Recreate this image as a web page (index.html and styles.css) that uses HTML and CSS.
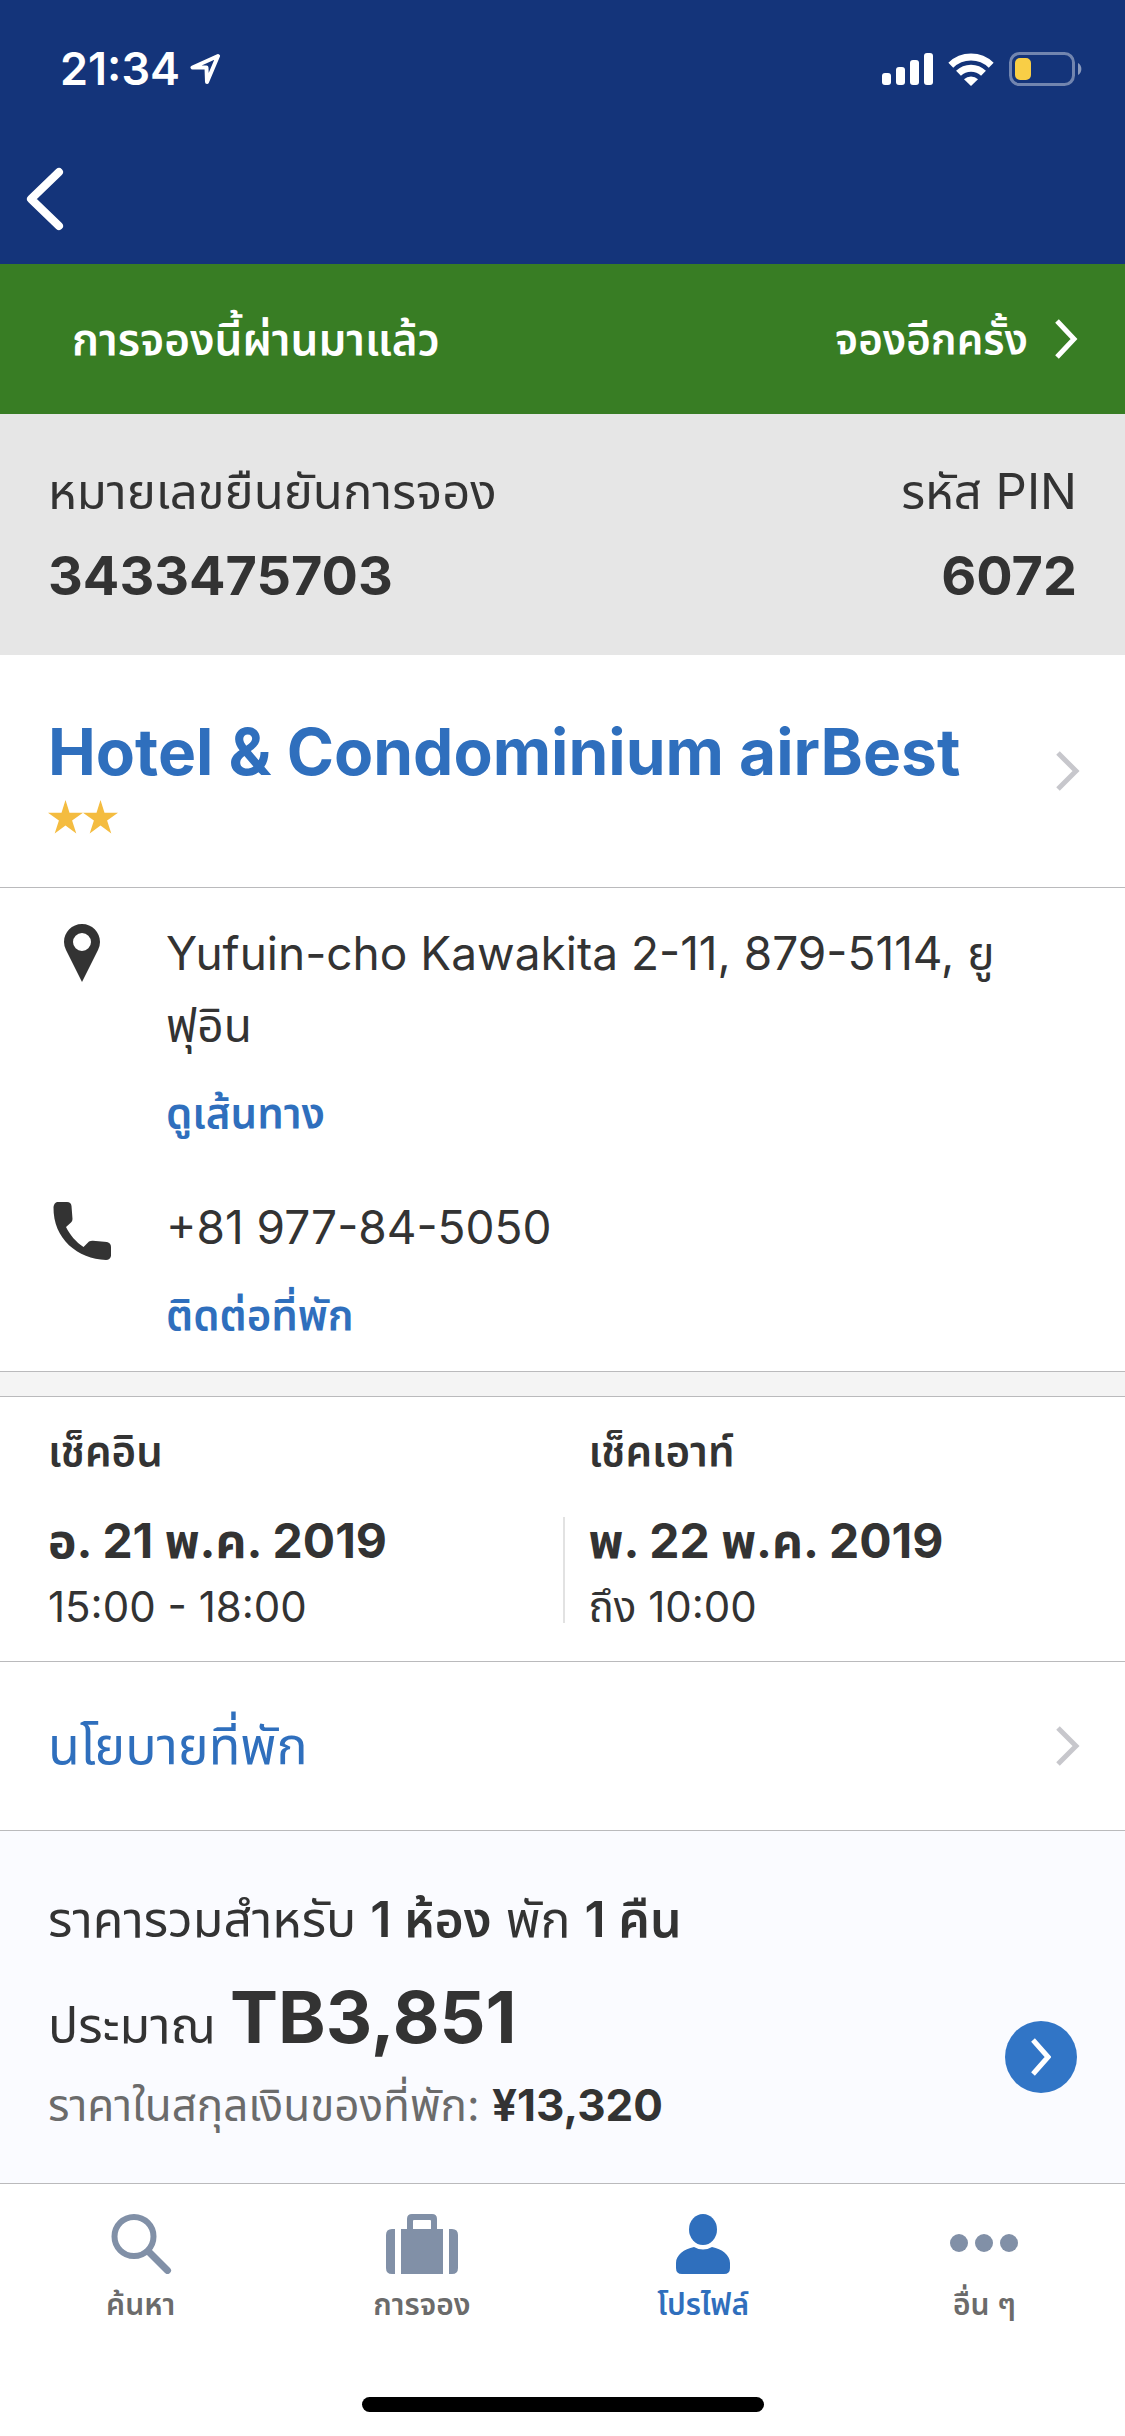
FILE: index.html
```
<!DOCTYPE html>
<html lang="th">
<head>
<meta charset="utf-8">
<title>การจอง</title>
<meta name="viewport" content="width=device-width, initial-scale=1">
<link rel="stylesheet" href="styles.css">
</head>
<body>
<div class="app">
  <header class="header">
    <div class="status">
      <span class="clock">21:34</span>
      <svg class="locate" width="32" height="32" viewBox="0 0 32 32" aria-hidden="true"><path d="M28 3L2.500 14.500H16.500L17 29Z" fill="none" stroke="#fff" stroke-width="4" stroke-linejoin="round"/></svg>
      <span class="status-icons">
        <svg width="51" height="33" viewBox="0 0 51 33" aria-hidden="true"><g fill="#fff"><rect y="20" width="9" height="12" rx="3"/><rect x="14" y="14" width="9" height="18" rx="3"/><rect x="28" y="7" width="9" height="25" rx="3"/><rect x="42" width="9" height="32" rx="3"/></g></svg>
        <svg width="46" height="33" viewBox="0 0 46 33" aria-hidden="true"><g fill="none" stroke="#fff" stroke-width="7"><path d="M2.800 12.200A29 29 0 0 1 43.200 12.200"/><path d="M10.500 20.200A18 18 0 0 1 35.500 20.200"/></g><path d="M16 26.300A10 10 0 0 1 30 26.300L23 33Z" fill="#fff"/></svg>
        <svg width="73" height="34" viewBox="0 0 73 34" aria-hidden="true"><rect x="1.500" y="1.500" width="63" height="31" rx="9" fill="none" stroke="#fff" stroke-opacity=".4" stroke-width="3"/><rect x="6" y="6" width="16" height="22" rx="5" fill="#f8ce46"/><path d="M69 11A7 7 0 0 1 69 23Z" fill="#fff" fill-opacity=".5"/></svg>
      </span>
    </div>
    <button class="back" type="button" aria-label="ย้อนกลับ"><svg width="38" height="64" viewBox="0 0 38 64" aria-hidden="true"><path d="M33 5L5 32L33 59" fill="none" stroke="#fff" stroke-width="8" stroke-linecap="round" stroke-linejoin="round"/></svg></button>
  </header>

  <main>
    <section class="banner">
      <span class="banner-title">การจองนี้ผ่านมาแล้ว</span>
      <a class="again" href="#">จองอีกครั้ง <svg width="26" height="40" viewBox="0 0 26 40" aria-hidden="true"><path d="M4 2L21 20L4 38" fill="none" stroke="#fff" stroke-width="5"/></svg></a>
    </section>

    <dl class="codes">
      <div><dt>หมายเลขยืนยันการจอง</dt><dd>3433475703</dd></div>
      <div class="right"><dt>รหัส PIN</dt><dd>6072</dd></div>
    </dl>

    <a class="hotel" href="#">
      <span>
        <strong class="hotel-name">Hotel &amp; Condominium airBest</strong>
        <svg class="stars" width="70" height="34" viewBox="0 0 70 34" role="img" aria-label="2"><g fill="#f4bc40"><path id="s" d="M17.500 0L21.500 12.700H35L24.100 20.500L28.300 33.500L17.500 25.500L6.700 33.500L10.900 20.500L0 12.700H13.500Z"/><use href="#s" x="35"/></g></svg>
      </span>
      <svg class="chevron" width="26" height="40" viewBox="0 0 26 40" aria-hidden="true"><path d="M3 2L21 20L3 38"/></svg>
    </a>

    <section class="contact">
      <div class="contact-row">
        <svg width="70" height="64" viewBox="0 0 70 64" aria-hidden="true"><path fill-rule="evenodd" d="M34 1C24 1 16 9 16 19Q16 23 18 27L34 59L50 27Q52 23 52 19C52 9 44 1 34 1ZM34 10A9 9 0 1 1 34 28A9 9 0 1 1 34 10Z" fill="#333"/></svg>
        <div>
          <p>Yufuin-cho Kawakita 2-11, 879-5114, ยู<br>ฟุอิน</p>
          <a href="#">ดูเส้นทาง</a>
        </div>
      </div>
      <div class="contact-row">
        <svg width="70" height="64" viewBox="0 0 70 64" aria-hidden="true"><path d="M9 5H19Q23 5 23.500 9L24.500 22Q24.500 24 23 25.500L18 30C22 38 28 45 35.500 50L41 44.500Q43 43.500 45 43.700L59 45Q63 46 63 50V59Q62 63 58 63C30 62 5 42 5.500 10Q6 6 9 5Z" fill="#333"/></svg>
        <div>
          <p>+81 977-84-5050</p>
          <a href="#">ติดต่อที่พัก</a>
        </div>
      </div>
    </section>

    <div class="gap"></div>

    <section class="dates">
      <h2>เช็คอิน</h2>
      <h2>เช็คเอาท์</h2>
      <div class="date"><strong>อ. 21 พ.ค. 2019</strong><span>15:00 - 18:00</span></div>
      <div class="date"><strong>พ. 22 พ.ค. 2019</strong><span>ถึง 10:00</span></div>
    </section>

    <a class="policy" href="#">
      <span>นโยบายที่พัก</span>
      <svg class="chevron" width="26" height="40" viewBox="0 0 26 40" aria-hidden="true"><path d="M3 2L21 20L3 38"/></svg>
    </a>

    <section class="price">
      <div>
        <p class="summary">ราคารวมสำหรับ <b>1 ห้อง</b> พัก <b>1 คืน</b></p>
        <p class="total">ประมาณ <strong>TB3,851</strong></p>
        <p class="local">ราคาในสกุลเงินของที่พัก: <b>¥13,320</b></p>
      </div>
      <button class="more" type="button" aria-label="รายละเอียดราคา"><svg width="20" height="38" viewBox="0 0 20 38" aria-hidden="true"><path d="M2 2L17 19L2 36" fill="none" stroke="#fff" stroke-width="5"/></svg></button>
    </section>
  </main>

  <nav class="tabs">
    <a href="#"><svg width="62" height="60" viewBox="0 0 62 60" aria-hidden="true"><circle cx="24" cy="22.500" r="19.500" fill="none" stroke="#8190a7" stroke-width="6"/><path d="M39 38L57.500 56.500" stroke="#8190a7" stroke-width="7" stroke-linecap="round"/></svg><span>ค้นหา</span></a>
    <a href="#"><svg width="72" height="60" viewBox="0 0 72 60" aria-hidden="true"><path fill-rule="evenodd" d="M9 15H6Q0 15 0 21V54Q0 60 6 60H9ZM63 15H66Q72 15 72 21V54Q72 60 66 60H63ZM15 15H21V5Q21 0 26 0H46Q51 0 51 5V15H57V60H15ZM27 15H45V7Q45 6 44 6H28Q27 6 27 7Z" fill="#8190a7"/></svg><span>การจอง</span></a>
    <a class="active" href="#" aria-current="page"><svg width="54" height="60" viewBox="0 0 54 60" aria-hidden="true"><ellipse cx="27" cy="15.500" rx="14" ry="15.500" fill="#2f6fbd"/><path d="M18 33Q27 38 36 33C46 35 54 41 54 49V54Q54 60 48 60H6Q0 60 0 54V49C0 41 8 35 18 33Z" fill="#2f6fbd"/></svg><span>โปรไฟล์</span></a>
    <a href="#"><svg width="68" height="60" viewBox="0 0 68 60" aria-hidden="true"><g fill="#8190a7"><circle cx="9" cy="29" r="9"/><circle cx="34" cy="29" r="9"/><circle cx="59" cy="29" r="9"/></g></svg><span>อื่น ๆ</span></a>
  </nav>
  <div class="home-bar"></div>
</div>
</body>
</html>
```
FILE: styles.css
```
* { box-sizing: border-box; }
body, p, h2, dl, dd { margin: 0; }
body {
  background: #fff;
  color: #333;
  font-family: Inter, "Noto Sans Thai", "Noto Sans Thai Looped", "Noto Sans", sans-serif;
  font-size: 48px;
  line-height: 72px;
}
a { color: #2f6fbd; text-decoration: none; }
button { border: 0; padding: 0; background: none; cursor: pointer; }
svg { display: block; flex: none; }
b, strong { font-weight: 700; }

.app { display: flex; flex-direction: column; min-height: 100vh; }

.header { min-height: 264px; background: #14347a; }
.status { display: flex; align-items: center; padding: 36px 43px 0 60px; }
.clock { color: #fff; font-size: 45px; font-weight: 600; line-height: 66px; }
.locate { margin-left: 10px; }
.status-icons { display: flex; align-items: center; gap: 15px; margin-left: auto; }
.back { display: block; margin: 65px 0 0 26px; }

.banner {
  display: flex;
  justify-content: space-between;
  align-items: center;
  min-height: 150px;
  padding: 0 46px 0 72px;
  background: #387d24;
  color: #fff;
  font-weight: 600;
}
.banner-title { font-size: 44px; }
.again { display: flex; align-items: center; gap: 25px; color: #fff; font-size: 42px; }

.codes {
  display: flex;
  justify-content: space-between;
  padding: 42px 48px 31px;
  background: #e6e6e6;
}
.codes dt { font-size: 49px; }
.codes dd { font-size: 54px; font-weight: 700; line-height: 96px; }
.right { text-align: right; }

.hotel, .policy {
  display: flex;
  justify-content: space-between;
  align-items: center;
  padding: 0 44px 0 48px;
  border-bottom: 1px solid #bababc;
}
.hotel { min-height: 233px; }
.hotel-name { display: block; font-size: 64px; line-height: 94px; }
.stars { margin: 1px 0 4px; }
.chevron { fill: none; stroke: #c7c7cc; stroke-width: 5; }

.contact {
  display: flex;
  flex-direction: column;
  gap: 26px;
  padding: 29px 90px 4px 48px;
  border-bottom: 1px solid #bababc;
  font-size: 46px;
}
.contact-row { display: flex; gap: 48px; }
.contact-row svg { margin-top: 6px; }
.contact a { display: block; font-size: 42px; font-weight: 600; line-height: 104px; }

.gap { height: 25px; background: #f4f4f4; border-bottom: 1px solid #bababc; }

.dates {
  display: grid;
  grid-template-columns: 1fr 1fr;
  row-gap: 30px;
  padding: 18px 0 38px;
  border-bottom: 1px solid #bababc;
}
.dates h2 { padding-left: 48px; font-size: 42px; font-weight: 600; }
.dates h2 + h2 { padding-left: 26px; }
.date { padding-left: 48px; }
.date + .date { padding-left: 24px; border-left: 2px solid #e2e2e2; }
.date strong { display: block; line-height: 48px; }
.date span { display: block; margin-top: 26px; font-size: 42px; line-height: 32px; }

.policy { min-height: 169px; font-size: 52px; }

.price {
  display: flex;
  justify-content: space-between;
  align-items: flex-end;
  padding: 52px 48px;
  background: #fafbff;
  border-bottom: 1px solid #bababc;
  font-size: 50px;
}
.summary b { font-weight: 600; }
.total { margin-top: 16px; line-height: 108px; }
.total strong { font-size: 72px; line-height: 72px; }
.local { color: #6b6b6b; font-size: 44px; line-height: 52px; }
.local b { color: #333; }
.more {
  display: grid;
  place-items: center;
  width: 72px;
  height: 72px;
  margin-bottom: 38px;
  border-radius: 50%;
  background: #3175c6;
}

.tabs { display: grid; grid-template-columns: repeat(4, 1fr); padding-top: 30px; }
.tabs a {
  display: flex;
  flex-direction: column;
  align-items: center;
  color: #6b6b6b;
  font-size: 30px;
  font-weight: 600;
  line-height: 60px;
}
.tabs .active { color: #2f6fbd; }
.home-bar { width: 402px; height: 15px; margin: auto auto 24px; border-radius: 8px; background: #000; }
```
